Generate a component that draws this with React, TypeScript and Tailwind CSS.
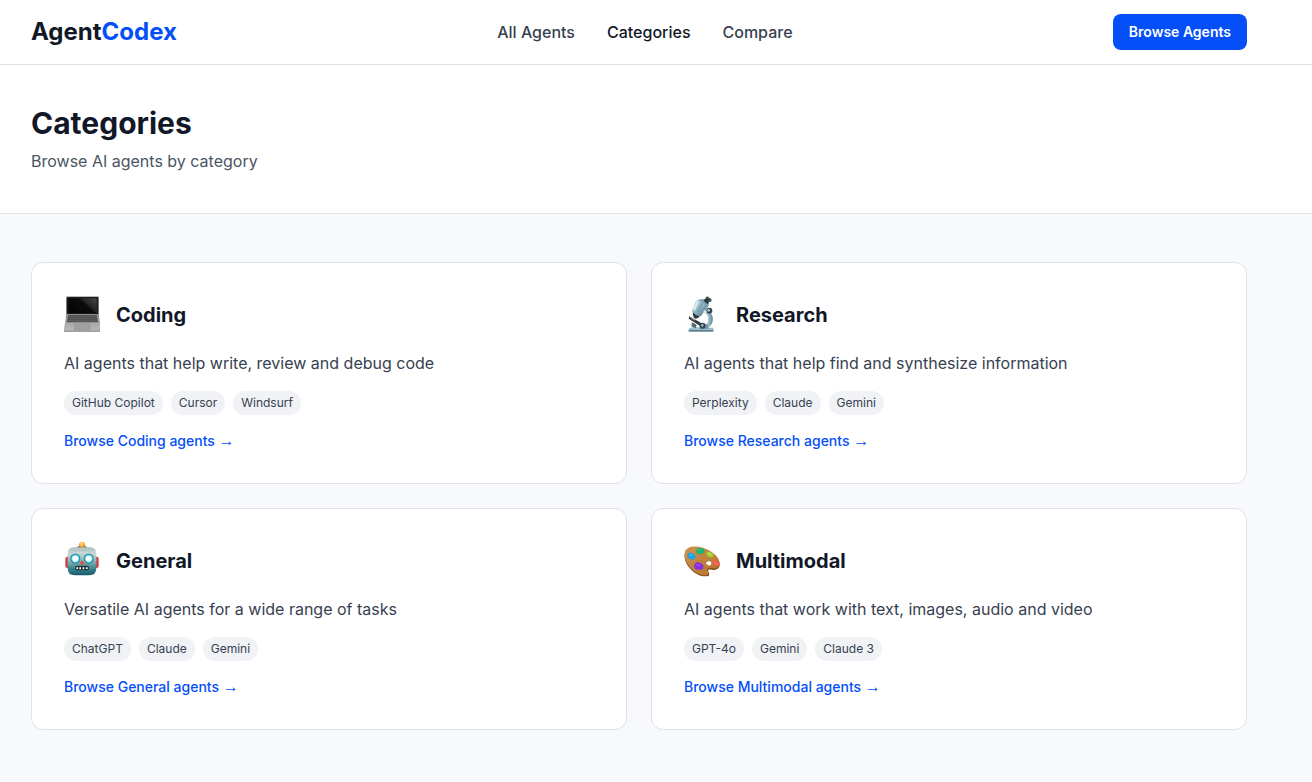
import type { ReactNode } from 'react';

type Category = {
  name: string;
  description: string;
  agents: string[];
  icon: ReactNode;
};

const iconClasses = 'h-10 w-9 shrink-0';

function LaptopIcon() {
  return (
    <svg viewBox="24 27 108 120" className={iconClasses} aria-hidden="true">
      <defs>
        <linearGradient id="laptop-screen" x1="0" y1="0.6" x2="1" y2="0">
          <stop offset="0" stopColor="#050505" />
          <stop offset="0.52" stopColor="#0c0c0c" />
          <stop offset="0.6" stopColor="#242424" />
          <stop offset="1" stopColor="#4a4a4a" />
        </linearGradient>
        <linearGradient id="laptop-base" x1="0" y1="0" x2="0" y2="1">
          <stop offset="0" stopColor="#8c8c8c" />
          <stop offset="0.5" stopColor="#a9a9a9" />
          <stop offset="1" stopColor="#bababa" />
        </linearGradient>
      </defs>
      <rect x="30" y="31" width="99" height="56" rx="4" fill="#a5a7a8" />
      <rect x="32" y="33" width="95" height="53" rx="3" fill="#1d1d1d" />
      <rect x="37" y="37" width="85" height="45" fill="url(#laptop-screen)" />
      <path d="M31 84h97l8 51H23z" fill="url(#laptop-base)" />
      <path d="M37 87h85l5 22H32z" fill="#505050" />
      <path d="M36 92h87M35 98h89M34 104h91" stroke="#777" strokeWidth="1" />
      <path
        d="M44 87l-3 22M53 87l-2 22M62 87l-1 22M71 87v22M80 87v22M89 87v22M98 87l1 22M107 87l2 22M115 87l3 22"
        stroke="#696969"
        strokeWidth="1"
      />
      <path d="M56 113h46l2 19H54z" fill="#a0a0a0" stroke="#8d8d8d" strokeWidth="1" />
      <path d="M23 134h113v1q0 2-3 2H26q-3 0-3-2z" fill="#808080" />
    </svg>
  );
}

function MicroscopeIcon() {
  return (
    <svg viewBox="24 27 108 120" className={iconClasses} aria-hidden="true">
      <defs>
        <linearGradient id="scope-arm" x1="0" y1="0" x2="1" y2="0">
          <stop offset="0" stopColor="#6b91a3" />
          <stop offset="0.55" stopColor="#a8c8d6" />
          <stop offset="1" stopColor="#5f8598" />
        </linearGradient>
        <linearGradient id="scope-tube" x1="0" y1="0" x2="1" y2="1">
          <stop offset="0" stopColor="#c6dfe8" />
          <stop offset="0.5" stopColor="#8bb0c1" />
          <stop offset="1" stopColor="#42606f" />
        </linearGradient>
      </defs>
      <path d="M90 68c16 10 23 23 20 38-2 10-8 16-15 21l-20-1c16-7 22-15 22-27 0-9-5-16-13-22z" fill="url(#scope-arm)" />
      <path d="M40 127q17-7 35-2h36q3 5 1 11H38q-2-6 2-9z" fill="#9ebdca" />
      <path d="M38 132h74v5H38z" fill="#5f7e8e" />
      <path d="M71 117l24-3 3 14-27 2z" fill="#7699a9" />
      <path d="M40 91l46 26-4 9-44-28z" fill="#34393e" />
      <path d="M43 94l14 9" stroke="#a1b0b6" strokeWidth="3" />
      <path d="M48 109l14 7-3 11-13-6z" fill="#4e6977" />
      <circle cx="80" cy="119" r="9" fill="#354954" />
      <circle cx="79" cy="118" r="4" fill="#96b2bf" />
      <path d="M50 73l23 15-7 9q-10 0-15-9z" fill="#24343d" />
      <path d="M55 86l10 5-5 8-8-5z" fill="#30363b" />
      <path d="M60 45q12-10 27-3l12 16-25 33q-18-1-26-17z" fill="url(#scope-tube)" />
      <path d="M65 48L55 70" stroke="#dceaf0" strokeWidth="7" strokeLinecap="round" />
      <path d="M78 53L66 78" stroke="#5d8193" strokeWidth="3" strokeLinecap="round" opacity="0.6" />
      <path d="M68 42l17-3 15 12-6 10z" fill="#7ba3b5" />
      <path d="M83 44l7-9 11 8-6 12z" fill="#28343c" />
      <path d="M88 35l6-4 13 9-2 8-7-1z" fill="#4e5860" />
      <path d="M92 37l11 7" stroke="#202a31" strokeWidth="3" />
      <circle cx="100" cy="74" r="9" fill="#35454f" />
      <circle cx="98" cy="73" r="4" fill="#b7ced7" />
      <circle cx="87" cy="78" r="5" fill="#e0e7ea" />
    </svg>
  );
}

function RobotIcon() {
  return (
    <svg viewBox="0 0 108 120" className={iconClasses} aria-hidden="true">
      <defs>
        <linearGradient id="robot-face" x1="0" y1="0" x2="0" y2="1">
          <stop offset="0" stopColor="#9bb5b3" />
          <stop offset="0.2" stopColor="#c7d8d4" />
          <stop offset="0.5" stopColor="#8ab3b3" />
          <stop offset="0.78" stopColor="#347f8b" />
          <stop offset="1" stopColor="#165c6c" />
        </linearGradient>
        <radialGradient id="robot-eye">
          <stop offset="0.6" stopColor="#ffffff" />
          <stop offset="0.75" stopColor="#7ce7fb" />
          <stop offset="1" stopColor="#08a5cf" />
        </radialGradient>
      </defs>
      <rect x="4" y="47" width="13" height="34" rx="6" fill="#cc3f48" />
      <rect x="91" y="47" width="13" height="34" rx="6" fill="#cc3f48" />
      <path d="M40 22q0-9 14-9t14 9z" fill="#67588f" />
      <circle cx="54" cy="12" r="9" fill="#f39a2b" />
      <circle cx="53" cy="9" r="5" fill="#ffd66a" />
      <path d="M31 19h46q20 0 20 21v42q0 21-22 21H33q-22 0-22-21V40q0-21 20-21z" fill="url(#robot-face)" />
      <path d="M15 45q0-22 20-22h38q20 0 20 22" fill="none" stroke="#e3ece9" strokeWidth="2" opacity="0.6" />
      <circle cx="34" cy="53" r="15" fill="#397f8b" />
      <circle cx="74" cy="53" r="15" fill="#397f8b" />
      <circle cx="34" cy="53" r="13" fill="url(#robot-eye)" />
      <circle cx="74" cy="53" r="13" fill="url(#robot-eye)" />
      <path d="M54 57l8 13H46z" fill="#e6473d" />
      <rect x="33" y="74" width="42" height="14" rx="5" fill="#243941" />
      <path d="M37 79h5v5h-5zM46 79h5v6h-5zM56 79h5v6h-5zM66 79h5v5h-5z" fill="#f7f6ec" />
    </svg>
  );
}

function PaletteIcon() {
  return (
    <svg viewBox="0 0 108 120" className={iconClasses} aria-hidden="true">
      <defs>
        <linearGradient id="palette-wood" x1="0" y1="0" x2="1" y2="1">
          <stop offset="0" stopColor="#cf934f" />
          <stop offset="1" stopColor="#b3702f" />
        </linearGradient>
      </defs>
      <path
        d="M2 41c3-22 28-26 53-19 29 8 51 28 52 48 1 13-10 19-24 16-9-2-13 1-9 8 4 9 1 12-9 12C38 108-2 72 2 41z"
        fill="#84501f"
      />
      <path
        d="M2 36c3-20 29-23 54-16 28 8 50 28 51 46 1 12-11 18-24 15-10-2-16 3-12 10 4 8 1 12-8 12C35 104-2 66 2 36z"
        fill="url(#palette-wood)"
      />
      <ellipse cx="74" cy="66" rx="8" ry="7" transform="rotate(25 74 66)" fill="#ffffff" />
      <path d="M65 65q2-7 11-5" fill="none" stroke="#75431c" strokeWidth="2" />
      <path d="M38 26c3-7 9-4 13-4 9 0 14 6 9 12-3 8-10 4-15 6-7 0-11-9-7-14z" fill="#1bb56c" />
      <path d="M13 37c5-5 9-1 14 1 8 2 10 11 5 16-5 4-10 0-15-1-7-2-9-12-4-16z" fill="#1aa5e0" />
      <path d="M33 68c4-6 11-4 16-2 9 2 12 12 7 18-4 4-11 1-17 2-8 0-12-12-6-18z" fill="#8a2fdd" />
      <path d="M69 34c5-5 10-1 14 2 7 3 6 12 1 13-6 1-9-2-14-4-4-2-5-8-1-11z" fill="#a3d42c" />
      <path d="M89 61c4-4 10 0 14 3 5 5 4 11-2 11-6 1-10-1-14-5-3-3-2-7 2-9z" fill="#f9574a" />
      <path d="M42 27l7-1M17 42l7 1M38 72l8 1M74 37l6 2M93 66l6 2" stroke="#ffffff" strokeWidth="2" strokeLinecap="round" opacity="0.4" />
    </svg>
  );
}

const categories: Category[] = [
  {
    name: 'Coding',
    description: 'AI agents that help write, review and debug code',
    agents: ['GitHub Copilot', 'Cursor', 'Windsurf'],
    icon: <LaptopIcon />,
  },
  {
    name: 'Research',
    description: 'AI agents that help find and synthesize information',
    agents: ['Perplexity', 'Claude', 'Gemini'],
    icon: <MicroscopeIcon />,
  },
  {
    name: 'General',
    description: 'Versatile AI agents for a wide range of tasks',
    agents: ['ChatGPT', 'Claude', 'Gemini'],
    icon: <RobotIcon />,
  },
  {
    name: 'Multimodal',
    description: 'AI agents that work with text, images, audio and video',
    agents: ['GPT-4o', 'Gemini', 'Claude 3'],
    icon: <PaletteIcon />,
  },
];

const containerClasses = 'pl-[31px] pr-[65px]';

function Header() {
  return (
    <header className="border-b border-[#dfe2e8] bg-white">
      <div className={`${containerClasses} flex h-16 items-center justify-between`}>
        <a href="#" className="text-2xl font-bold text-[#111827]">
          Agent<span className="text-[#044ff7]">Codex</span>
        </a>
        <nav className="flex items-center gap-8 font-medium text-[#374151]">
          <a href="#agents">All Agents</a>
          <a href="#categories" className="text-[#111827]">
            Categories
          </a>
          <a href="#compare">Compare</a>
        </nav>
        <button type="button" className="rounded-lg bg-[#044ff7] px-4 py-2 text-sm font-semibold text-white">
          Browse Agents
        </button>
      </div>
    </header>
  );
}

function CategoryCard({ name, description, agents, icon }: Category) {
  return (
    <article className="rounded-xl border border-[#dfe2e8] bg-white p-8">
      <div className="flex items-center gap-4">
        {icon}
        <h2 className="text-xl font-bold text-[#111827]">{name}</h2>
      </div>
      <p className="mt-4 text-[#374151]">{description}</p>
      <div className="mt-4 flex flex-wrap gap-2">
        {agents.map((agent) => (
          <span key={agent} className="rounded-full bg-[#f0f2f6] px-2 py-1 text-xs text-[#374151]">
            {agent}
          </span>
        ))}
      </div>
      <a href={`#${name.toLowerCase()}`} className="mt-4 flex text-sm font-medium whitespace-pre text-[#044ff7]">
        {`Browse ${name} agents `}
        <span className="font-['Liberation_Serif',serif] text-base leading-5">→</span>
      </a>
    </article>
  );
}

export default function App() {
  return (
    <div className="min-h-screen bg-[#f8f9fb] font-['Inter',sans-serif]">
      <Header />
      <main>
        <section className="border-b border-[#dfe2e8] bg-white">
          <div className={`${containerClasses} py-10`}>
            <h1 className="text-3xl font-bold text-[#111827]">Categories</h1>
            <p className="mt-2 text-[#4b5563]">Browse AI agents by category</p>
          </div>
        </section>
        <section className={`${containerClasses} grid gap-6 py-12 md:grid-cols-2`}>
          {categories.map((category) => (
            <CategoryCard key={category.name} {...category} />
          ))}
        </section>
      </main>
    </div>
  );
}
